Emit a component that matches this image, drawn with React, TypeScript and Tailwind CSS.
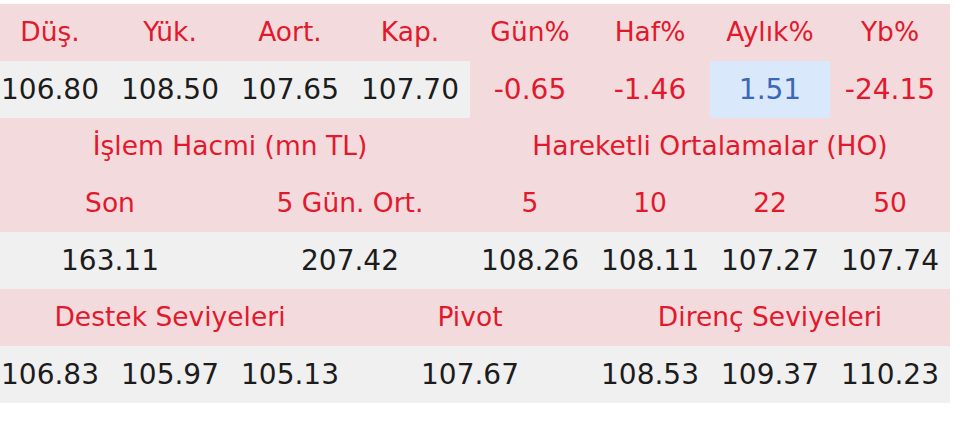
type Cell = {
    text: string
    span?: number
    kind: 'head' | 'val' | 'neg' | 'pos'
}

const rows: Cell[][] = [
    [
        { text: 'Düş.', kind: 'head' },
        { text: 'Yük.', kind: 'head' },
        { text: 'Aort.', kind: 'head' },
        { text: 'Kap.', kind: 'head' },
        { text: 'Gün%', kind: 'head' },
        { text: 'Haf%', kind: 'head' },
        { text: 'Aylık%', kind: 'head' },
        { text: 'Yb%', kind: 'head' },
    ],
    [
        { text: '106.80', kind: 'val' },
        { text: '108.50', kind: 'val' },
        { text: '107.65', kind: 'val' },
        { text: '107.70', kind: 'val' },
        { text: '-0.65', kind: 'neg' },
        { text: '-1.46', kind: 'neg' },
        { text: '1.51', kind: 'pos' },
        { text: '-24.15', kind: 'neg' },
    ],
    [
        { text: 'İşlem Hacmi (mn TL)', span: 4, kind: 'head' },
        { text: 'Hareketli Ortalamalar (HO)', span: 4, kind: 'head' },
    ],
    [
        { text: 'Son', span: 2, kind: 'head' },
        { text: '5 Gün. Ort.', span: 2, kind: 'head' },
        { text: '5', kind: 'head' },
        { text: '10', kind: 'head' },
        { text: '22', kind: 'head' },
        { text: '50', kind: 'head' },
    ],
    [
        { text: '163.11', span: 2, kind: 'val' },
        { text: '207.42', span: 2, kind: 'val' },
        { text: '108.26', kind: 'val' },
        { text: '108.11', kind: 'val' },
        { text: '107.27', kind: 'val' },
        { text: '107.74', kind: 'val' },
    ],
    [
        { text: 'Destek Seviyeleri', span: 3, kind: 'head' },
        { text: 'Pivot', span: 2, kind: 'head' },
        { text: 'Direnç Seviyeleri', span: 3, kind: 'head' },
    ],
    [
        { text: '106.83', kind: 'val' },
        { text: '105.97', kind: 'val' },
        { text: '105.13', kind: 'val' },
        { text: '107.67', span: 2, kind: 'val' },
        { text: '108.53', kind: 'val' },
        { text: '109.37', kind: 'val' },
        { text: '110.23', kind: 'val' },
    ],
]

const spanClass: Record<number, string> = {
    1: 'col-span-1',
    2: 'col-span-2',
    3: 'col-span-3',
    4: 'col-span-4',
}

const kindClass = {
    head: 'bg-[#f2dadd] text-[#e2192c] text-[26.5px]',
    val: 'bg-[#f0f0f0] text-[#1c1c1c] text-[28px]',
    neg: 'bg-[#f2dadd] text-[#e2192c] text-[28px]',
    pos: 'bg-[#dae8fc] text-[#3a67b8] text-[28px]',
}

export default function App() {
    return (
        <div className="w-[960px] h-[423px] bg-white overflow-hidden pt-[4px]" style={{ fontFamily: '"DejaVu Sans", sans-serif' }}>
            <div className="-ml-[10px] grid grid-cols-[repeat(8,120px)] auto-rows-[57px]">
                {rows.map((row, ri) =>
                    row.map((c, ci) => (
                        <div
                            key={`${ri}-${ci}`}
                            className={`${spanClass[c.span ?? 1]} ${kindClass[c.kind]} flex items-center justify-center whitespace-nowrap leading-none`}
                        >
                            {c.text}
                        </div>
                    ))
                )}
            </div>
        </div>
    )
}
